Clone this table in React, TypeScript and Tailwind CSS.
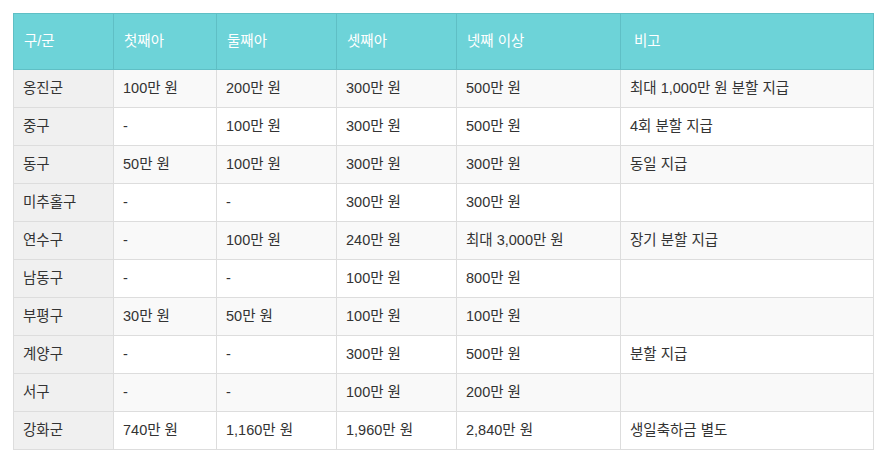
const columns = ['구/군', '첫째아', '둘째아', '셋째아', '넷째 이상', '비고'];

const widths = ['w-[100px]', 'w-[103px]', 'w-[120px]', 'w-[120px]', 'w-[164px]', 'w-[253px]'];

const rows: string[][] = [
  ['옹진군', '100만 원', '200만 원', '300만 원', '500만 원', '최대 1,000만 원 분할 지급'],
  ['중구', '-', '100만 원', '300만 원', '500만 원', '4회 분할 지급'],
  ['동구', '50만 원', '100만 원', '300만 원', '300만 원', '동일 지급'],
  ['미추홀구', '-', '-', '300만 원', '300만 원', ''],
  ['연수구', '-', '100만 원', '240만 원', '최대 3,000만 원', '장기 분할 지급'],
  ['남동구', '-', '-', '100만 원', '800만 원', ''],
  ['부평구', '30만 원', '50만 원', '100만 원', '100만 원', ''],
  ['계양구', '-', '-', '300만 원', '500만 원', '분할 지급'],
  ['서구', '-', '-', '100만 원', '200만 원', ''],
  ['강화군', '740만 원', '1,160만 원', '1,960만 원', '2,840만 원', '생일축하금 별도'],
];

export default function App() {
  return (
    <div className="min-h-screen bg-white pl-[13px] pt-[13px] font-['Liberation_Sans','Noto_Sans_CJK_KR',sans-serif]">
      <table className="table-fixed border-collapse text-[14.5px] w-[860px]">
        <thead>
          <tr className="bg-[#6dd3d8] text-white">
            {columns.map((c, i) => (
              <th
                key={c}
                className={`${widths[i]} h-[56px] border border-[#5fbfc5] px-[10px] text-left font-normal ${i === 5 ? 'pl-[13px]' : ''}`}
              >
                {c}
              </th>
            ))}
          </tr>
        </thead>
        <tbody>
          {rows.map((r, ri) => (
            <tr key={r[0]} className={ri % 2 === 0 ? 'bg-[#f9f9f9]' : 'bg-white'}>
              {r.map((cell, ci) => (
                <td
                  key={ci}
                  className={`h-[38px] border border-[#dddddd] px-[9px] text-[#333333] ${ci === 0 ? 'bg-[#f0f0f0]' : ''}`}
                >
                  {cell}
                </td>
              ))}
            </tr>
          ))}
        </tbody>
      </table>
    </div>
  );
}
